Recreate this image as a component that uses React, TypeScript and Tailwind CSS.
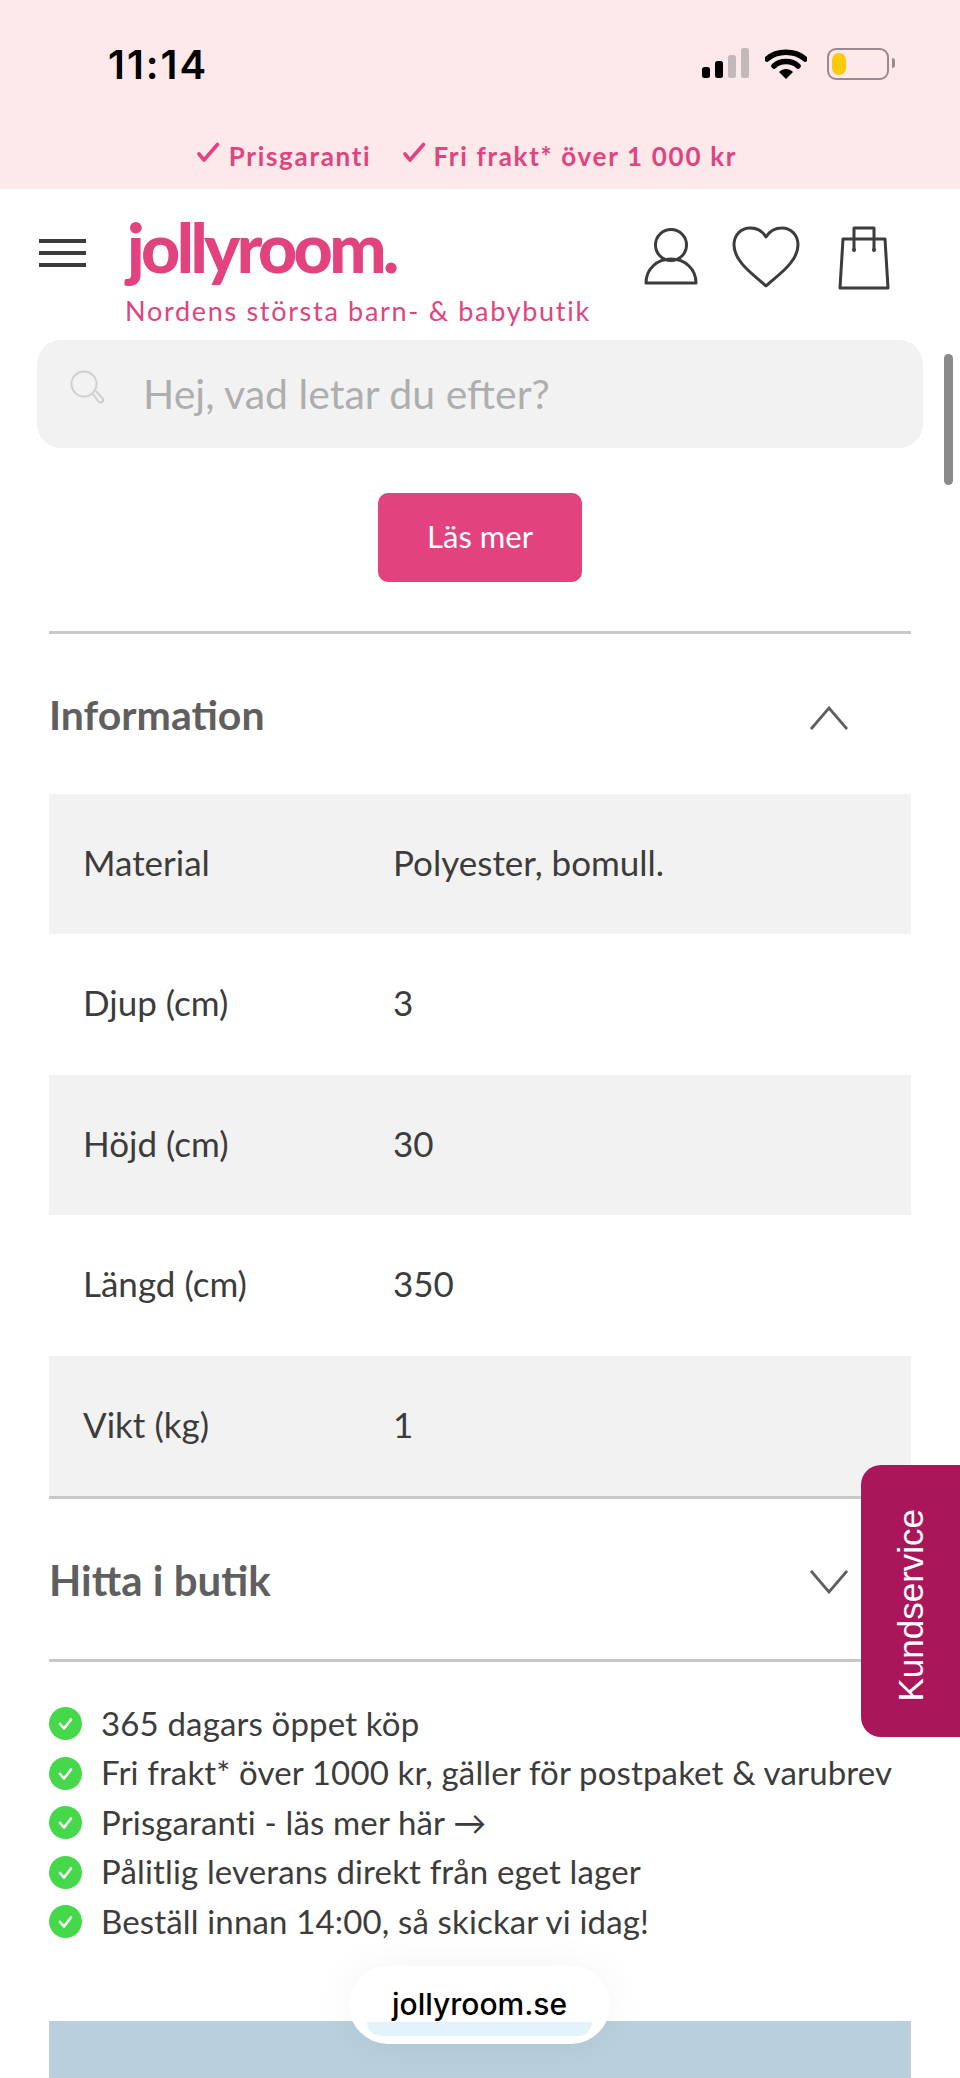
const SPECS = [
  { label: "Material", value: "Polyester, bomull." },
  { label: "Djup (cm)", value: "3" },
  { label: "Höjd (cm)", value: "30" },
  { label: "Längd (cm)", value: "350" },
  { label: "Vikt (kg)", value: "1" },
];

const USPS = [
  "365 dagars öppet köp",
  "Fri frakt* över 1000 kr, gäller för postpaket & varubrev",
  "Prisgaranti - läs mer här →",
  "Pålitlig leverans direkt från eget lager",
  "Beställ innan 14:00, så skickar vi idag!",
];

function Tick() {
  return (
    <svg width="23" height="22" viewBox="0 0 23 22" fill="none" className="mb-[6px] shrink-0">
      <path d="M2 12l5 6L20.5 2.5" stroke="#e2437f" strokeWidth="3.6" strokeLinecap="round" strokeLinejoin="round" />
    </svg>
  );
}

function StatusIcons() {
  return (
    <div className="flex items-center">
      <svg width="50" height="32" viewBox="0 0 50 32" className="mr-[16px]">
        <rect x="3" y="19" width="8" height="11" rx="2.5" fill="#000" />
        <rect x="16" y="13" width="8" height="17" rx="2.5" fill="#000" />
        <rect x="29" y="7" width="8" height="23" rx="2.5" fill="#c2b9bb" />
        <rect x="42" y="0" width="8" height="30" rx="2.5" fill="#c2b9bb" />
      </svg>
      <svg width="42" height="32" viewBox="0 0 42 32" className="mr-[20px]">
        <path d="M2 11 C12 2 30 2 40 11" stroke="#000" strokeWidth="5.5" fill="none" strokeLinecap="round" />
        <path d="M9 18 C15 12 27 12 33 18" stroke="#000" strokeWidth="5.5" fill="none" strokeLinecap="round" />
        <path d="M14 24 L21 31 L28 24 C24 20 18 20 14 24 Z" fill="#000" />
      </svg>
      <div className="relative h-[32px] w-[62px] rounded-[9px] border-[2.5px] border-[#968c8f] p-[3px]">
        <div className="h-full w-[14px] rounded-[7px] bg-[#fdc90c]" />
        <div className="absolute right-[-8px] top-[8px] h-[10px] w-[3px] rounded-r-[3px] bg-[#968c8f]" />
      </div>
    </div>
  );
}

function Hamburger() {
  return (
    <div className="flex w-[47px] flex-col gap-[8px]">
      <div className="h-[4px] bg-[#3c3c3c]" />
      <div className="h-[4px] bg-[#3c3c3c]" />
      <div className="h-[4px] bg-[#3c3c3c]" />
    </div>
  );
}

function UserIcon() {
  return (
    <svg width="54" height="58" viewBox="0 0 54 58" fill="none" stroke="#3c3c3c" strokeWidth="3" strokeLinejoin="round">
      <circle cx="27" cy="17" r="15.5" />
      <path d="M2 55 C2 41 13 31 27 31 C41 31 52 41 52 55 Z" />
    </svg>
  );
}

function HeartIcon() {
  return (
    <svg width="68" height="62" viewBox="0 0 68 62" fill="none" stroke="#3c3c3c" strokeWidth="3" strokeLinejoin="round">
      <path d="M34 60 C22 49 2 36 2 19 C2 8 10 2 18 2 C25 2 31 6 34 11 C37 6 43 2 50 2 C58 2 66 8 66 19 C66 36 46 49 34 60 Z" />
    </svg>
  );
}

function BagIcon() {
  return (
    <svg width="52" height="64" viewBox="0 0 52 64" fill="none" stroke="#3c3c3c" strokeWidth="3" strokeLinejoin="round">
      <path d="M5 13 H47 L50 62 H2 Z" />
      <path d="M16 24 V2 H36 V24" />
      <circle cx="16" cy="24" r="2" fill="#3c3c3c" strokeWidth="0" />
      <circle cx="36" cy="24" r="2" fill="#3c3c3c" strokeWidth="0" />
    </svg>
  );
}

function SearchIcon() {
  return (
    <svg width="36" height="38" viewBox="0 0 36 38" fill="none" stroke="#cfcfcf" strokeWidth="2">
      <circle cx="14" cy="14" r="12.5" />
      <path d="M23 24 L28 31 C30 34 34 32 33 29 L26 21" strokeLinejoin="round" />
    </svg>
  );
}

function Chevron({ up }: { up?: boolean }) {
  return (
    <svg width="38" height="24" viewBox="0 0 38 24" fill="none" stroke="#5f5f5f" strokeWidth="2.8" className="mt-[5px]">
      <path d={up ? "M1 23 L19 2 L37 23" : "M1 1 L19 22 L37 1"} />
    </svg>
  );
}

function GreenCheck() {
  return (
    <svg width="33" height="33" viewBox="0 0 33 33" className="mt-[2px] shrink-0">
      <circle cx="16.5" cy="16.5" r="16.5" fill="#44d84a" />
      <path d="M11 17l4 4.5 7-9" fill="none" stroke="#fff" strokeWidth="2.6" strokeLinecap="round" strokeLinejoin="round" />
    </svg>
  );
}

export default function App() {
  return (
    <div className="relative h-[2078px] w-[960px] overflow-hidden bg-white font-['Lato',sans-serif] text-[#3c3c3c]">
      {/* status bar + trust strip */}
      <div className="h-[189px] bg-[#fde8ea]">
        <div className="flex items-center justify-between pl-[108px] pr-[71px] pt-[40px]">
          <span className="mt-[2px] font-['Inter',sans-serif] text-[40px] font-semibold leading-[46px] tracking-[2px] text-black">11:14</span>
          <StatusIcons />
        </div>
        <div className="mt-[53px] flex items-center justify-center gap-[32px] pr-[26px] text-[26px] font-bold leading-[30px] tracking-[1.7px] text-[#e2437f]">
          <span className="flex items-center gap-[9px]"><Tick />Prisgaranti</span>
          <span className="flex items-center gap-[7px]"><Tick />Fri frakt* över 1 000 kr</span>
        </div>
      </div>

      {/* header */}
      <div className="flex h-[151px] items-start pl-[39px] pr-[70px]">
        <div className="pt-[50px]">
          <Hamburger />
        </div>
        <div className="ml-[39px] flex flex-col">
          <span className="ml-[2px] mt-[22px] text-[68px] font-black leading-[72px] tracking-[-3.6px] text-[#e2437f]">jollyroom.</span>
          <span className="mt-[12px] text-[27px] leading-[32px] tracking-[1.7px] text-[#e2437f]">Nordens största barn- &amp; babybutik</span>
        </div>
        <div className="ml-auto mt-[37px] flex items-start">
          <div className="mr-[34px] pt-[2px]"><UserIcon /></div>
          <HeartIcon />
          <div className="ml-[38px]"><BagIcon /></div>
        </div>
      </div>

      {/* search */}
      <div className="mx-[37px] flex h-[108px] items-center rounded-[24px] bg-[#f2f2f2] pl-[33px]">
        <div className="-mt-[10px]"><SearchIcon /></div>
        <span className="ml-[37px] text-[41px] leading-[44px] text-[#aeaeae]">Hej, vad letar du efter?</span>
      </div>

      <div className="mx-[49px]">
        <div className="flex justify-center pt-[45px]">
          <div className="flex h-[89px] w-[204px] items-center justify-center rounded-[10px] bg-[#e2437f] pb-[2px] text-[31px] text-white">Läs mer</div>
        </div>
        <div className="mt-[49px] h-[3px] bg-[#c8c8c8]" />

        {/* information */}
        <div className="flex h-[160px] items-center justify-between pr-[63px] pt-[2px]">
          <span className="text-[41px] font-bold leading-[44px] text-[#5f5f5f]">Information</span>
          <Chevron up />
        </div>
        <div className="flex flex-col">
          {SPECS.map((row, i) => (
            <div key={row.label} className={i % 2 === 0 ? "flex h-[140.4px] items-center bg-[#f2f2f2] pb-[4px] pl-[34px] text-[35px]" : "flex h-[140.4px] items-center pb-[4px] pl-[34px] text-[35px]"}>
              <span className="w-[310px]">{row.label}</span>
              <span>{row.value}</span>
            </div>
          ))}
        </div>
        <div className="h-[3px] bg-[#c8c8c8]" />

        {/* hitta i butik */}
        <div className="flex h-[160px] items-center justify-between pr-[63px] pt-[2px]">
          <span className="text-[42px] font-bold leading-[44px] text-[#5f5f5f]">Hitta i butik</span>
          <Chevron />
        </div>
        <div className="h-[3px] bg-[#c8c8c8]" />

        {/* usp list */}
        <ul className="mt-[41px] flex flex-col gap-[9.4px]">
          {USPS.map((text) => (
            <li key={text} className="flex h-[40px] items-center gap-[19px] whitespace-nowrap text-[33px] leading-[40px] tracking-[0.15px]">
              <GreenCheck />
              {text}
            </li>
          ))}
        </ul>
        <div className="mt-[80px] h-[60px] bg-[#b9cfdd]" />
      </div>

      {/* overlays */}
      <div className="absolute right-[7px] top-[354px] h-[131px] w-[9px] rounded-full bg-[#8a8a8a]" />
      <div className="absolute right-0 top-[1465px] flex h-[272px] w-[99px] items-center justify-center rounded-l-[20px] bg-[#a9165a] pl-[2px] pt-[8px]">
        <span className="-rotate-90 whitespace-nowrap font-['Liberation_Sans',sans-serif] text-[35px] text-white">Kundservice</span>
      </div>
      <div className="absolute left-[349px] top-[1966px] flex h-[78px] w-[261px] justify-center rounded-[39px] bg-white pt-[20px] shadow-[0_0_40px_rgba(0,0,0,0.05)]">
        <div className="absolute bottom-[8px] left-[18px] right-[18px] h-[14px] rounded-b-[20px] bg-[#e3f3fc]" />
        <span className="relative font-['Inter',sans-serif] text-[30px] font-medium leading-[36px] text-black">jollyroom.se</span>
      </div>
    </div>
  );
}
